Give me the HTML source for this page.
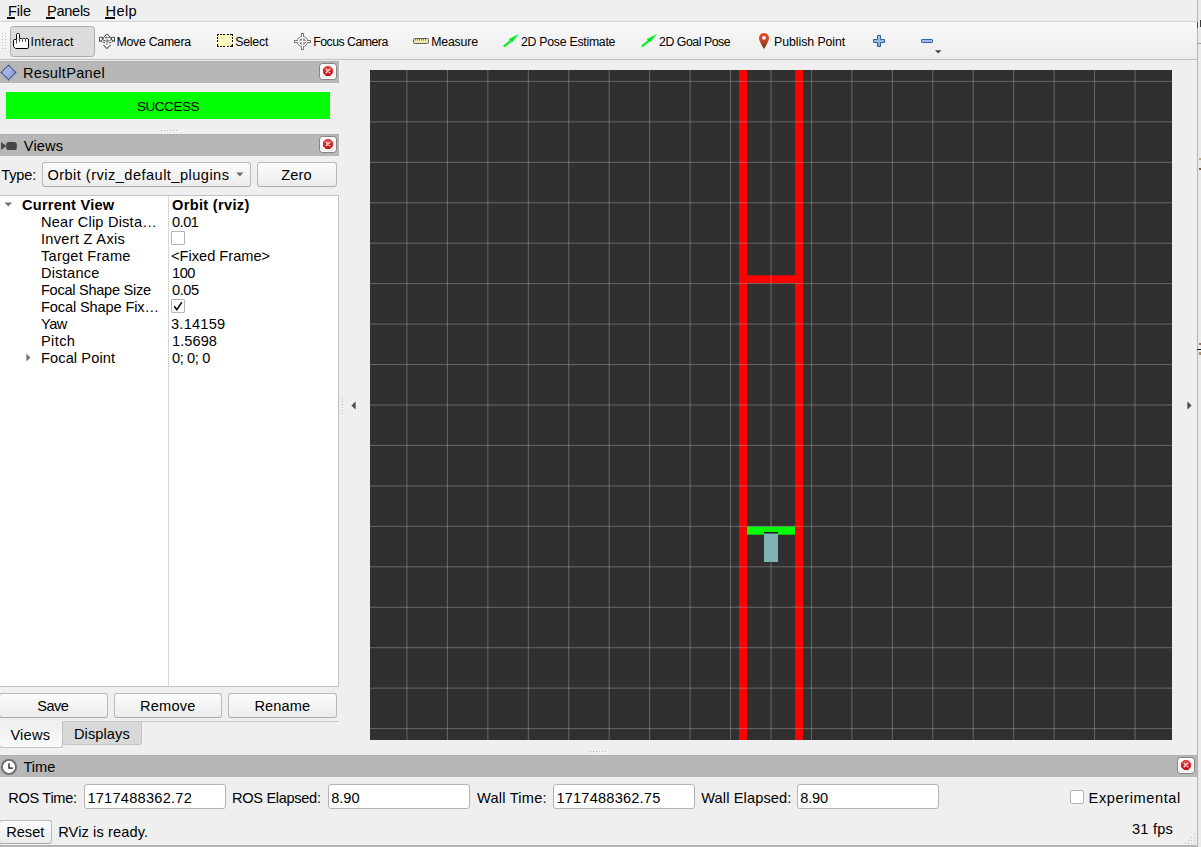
<!DOCTYPE html>
<html lang="en">
<head>
<meta charset="utf-8">
<title>RViz</title>
<style>
*{box-sizing:border-box;margin:0;padding:0}
html,body{width:1201px;height:847px;overflow:hidden;background:#efefef}
body{position:relative;font-family:"Liberation Sans","DejaVu Sans",sans-serif;font-size:14.6px;color:#000}
.abs{position:absolute}
.t{position:absolute;white-space:nowrap;line-height:1}
.t u{text-decoration:none}
.ul{position:absolute;top:17px;height:2px;background:#0a0a0a}
.m{font-size:14.6px}
.tb{font-size:12.3px}
.tr{font-size:14.6px}
.b{font-weight:bold}
#menubar{left:0;top:0;width:1197px;height:22px;background:#efefef;border-bottom:1px solid #d6d6d6}
#toolbar{left:0;top:22px;width:1197px;height:38px;background:linear-gradient(#f8f8f8,#eeeeee);border-bottom:1px solid #bebebe}
.docktitle{background:#b7b7b7;height:22px;border-top:1px solid #b0b0b0}
.closebtn{width:18px;height:17px;border:1px solid #858585;border-radius:3.5px;background:linear-gradient(#ffffff,#ededed);box-shadow:inset 0 0 0 1px #fdfdfd}
.btn{border:1px solid #b9b9b9;border-bottom-color:#adadad;border-radius:3px;background:linear-gradient(#fcfcfc,#ececec)}
.input{border:1px solid #b4b4b4;border-radius:3px;background:#fff;height:25px}
#view{left:370px;top:70px;width:802px;height:670px;background:#303030;overflow:hidden}
</style>
</head>
<body>
<div id="menubar" class="abs"></div>
<div id="toolbar" class="abs"></div>
<div class="ul" style="left:7.3px;width:7.6px"></div><div class="ul" style="left:46.2px;width:8.6px"></div><div class="ul" style="left:105.4px;width:9.6px"></div>

<!-- toolbar handle + icons -->
<svg class="abs" style="left:2px;top:33px" width="6" height="18" viewBox="0 0 6 18"><rect x="0" y="0" width="1" height="1" fill="#c2c2c2"/><rect x="1" y="1" width="1" height="1" fill="#fcfcfc"/><rect x="3" y="0" width="1" height="1" fill="#c2c2c2"/><rect x="4" y="1" width="1" height="1" fill="#fcfcfc"/><rect x="0" y="3" width="1" height="1" fill="#c2c2c2"/><rect x="1" y="4" width="1" height="1" fill="#fcfcfc"/><rect x="3" y="3" width="1" height="1" fill="#c2c2c2"/><rect x="4" y="4" width="1" height="1" fill="#fcfcfc"/><rect x="0" y="6" width="1" height="1" fill="#c2c2c2"/><rect x="1" y="7" width="1" height="1" fill="#fcfcfc"/><rect x="3" y="6" width="1" height="1" fill="#c2c2c2"/><rect x="4" y="7" width="1" height="1" fill="#fcfcfc"/><rect x="0" y="9" width="1" height="1" fill="#c2c2c2"/><rect x="1" y="10" width="1" height="1" fill="#fcfcfc"/><rect x="3" y="9" width="1" height="1" fill="#c2c2c2"/><rect x="4" y="10" width="1" height="1" fill="#fcfcfc"/><rect x="0" y="12" width="1" height="1" fill="#c2c2c2"/><rect x="1" y="13" width="1" height="1" fill="#fcfcfc"/><rect x="3" y="12" width="1" height="1" fill="#c2c2c2"/><rect x="4" y="13" width="1" height="1" fill="#fcfcfc"/><rect x="0" y="15" width="1" height="1" fill="#c2c2c2"/><rect x="1" y="16" width="1" height="1" fill="#fcfcfc"/><rect x="3" y="15" width="1" height="1" fill="#c2c2c2"/><rect x="4" y="16" width="1" height="1" fill="#fcfcfc"/></svg>
<div class="abs" style="left:10px;top:26px;width:85px;height:31px;background:#dcdcdc;border:1px solid #adadad;border-radius:3.5px"></div>
<svg class="abs" style="left:13px;top:33px" width="16" height="16" viewBox="0 0 16 16"><path d="M3.5 6.5V1.6Q3.5 .5 4.6 .5H5.4Q6.5 .5 6.5 1.6V5.5H8.6L9.5 6.1L10.4 5.5H11.6L12.5 6.1L13.4 5.5H14.2Q15.5 5.5 15.5 6.9V14.2Q15.5 15.5 14.2 15.5H2.5L.5 13.5V7.6Q.5 6.5 1.6 6.5Z" fill="#fff" stroke="#000" stroke-width="1" stroke-linejoin="round"/><path d="M3.5 6.5V10.6M6.5 5.5V8.8M9.5 6.2V8.8M12.5 6.2V8.8" stroke="#4a4a4a" stroke-width="1" fill="none"/></svg>
<svg class="abs" style="left:99px;top:33px" width="16" height="16" viewBox="0 0 16 16"><path d="M.5 4.3H3.7L3.1 7.2L.5 8.5Z M15.5 4.3H12.3L12.9 7.2L15.5 8.5Z" fill="#fff" stroke="#383838" stroke-width=".9" stroke-linejoin="round"/><path d="M4.5 4.3L8 .9L11.5 4.3Z" fill="#fff"/><path d="M4.5 4.3L8 .9L11.5 4.3" fill="none" stroke="#383838" stroke-width="1"/><path d="M8 15.6L11.6 11.8H4.4Z" fill="#fff"/><path d="M4.4 11.8L8 15.6L11.6 11.8" fill="none" stroke="#626262" stroke-width="1.1"/><rect x="7.1" y="4.6" width="1.8" height="7.4" fill="#b4b4b4"/><ellipse cx="8" cy="6.1" rx="4.3" ry="1.9" fill="none" stroke="#3c3c3c" stroke-width="1" stroke-dasharray="2.4 .8"/><path d="M1.6 8.1Q4 9.6 6.8 9.8M14.4 8.1Q12 9.6 9.2 9.8" fill="none" stroke="#444" stroke-width="1" stroke-dasharray="2 .8"/></svg>
<svg class="abs" style="left:216px;top:33px" width="18" height="15" viewBox="0 0 18 15"><rect x="0" y="0" width="18" height="15" rx="1" fill="#fff" opacity=".85"/><rect x="2" y="2" width="14" height="11" fill="#fdf7c3" stroke="#fff799" stroke-width="1"/><path d="M1 1.5H17M1 13.5H17M1.5 1V14M16.5 1V14" fill="none" stroke="#000" stroke-width="1" stroke-dasharray="2 1.2" shape-rendering="crispEdges"/><path d="M17 10.8V14H13.8Z" fill="#000"/></svg>
<svg class="abs" style="left:294px;top:33px" width="17" height="17" viewBox="0 0 17 17"><g fill="#fff" stroke="#7a7a7a" stroke-width="1"><rect x="7.5" y=".5" width="2" height="16"/><rect x=".5" y="7.5" width="16" height="2"/><circle cx="8.5" cy="8.5" r="5.2"/></g><circle cx="8.5" cy="8.5" r="3.1" fill="#a9a9a9" stroke="#6c6c6c" stroke-width="1" stroke-dasharray="1.4 .8"/><path d="M8.5 1V16M1 8.5H16" stroke="#fff" stroke-width="1.1"/></svg>
<svg class="abs" style="left:412px;top:37px" width="18" height="8" viewBox="0 0 18 8"><rect x="0" y="0" width="18" height="8" rx="1.5" fill="#fafafa"/><rect x="1.5" y="1.5" width="15" height="5" rx="1" fill="#f4eaab" stroke="#5f5f5f" stroke-width="1"/><path d="M3.5 2V3.6M5.5 2V3.6M7.5 2V3.6M9.5 2V3.6M11.5 2V3.6M13.5 2V3.6" stroke="#7b7b86" stroke-width="1"/></svg>
<svg class="abs" style="left:502px;top:33px" width="18" height="16" viewBox="0 0 18 16"><path d="M1.0 12.8L8.0 6.9L9.6 8.6L2.6 14.3Z" fill="#00f01e"/><path d="M6.9 6.1L17 1L10.4 9Z" fill="#00f01e"/><path d="M6.9 6.1L8.3 6.5L10 8.3L10.4 9Z" fill="#0a9c1c"/></svg>
<svg class="abs" style="left:640px;top:33px" width="18" height="16" viewBox="0 0 18 16"><path d="M1.0 12.8L8.0 6.9L9.6 8.6L2.6 14.3Z" fill="#00f01e"/><path d="M6.9 6.1L17 1L10.4 9Z" fill="#00f01e"/><path d="M6.9 6.1L8.3 6.5L10 8.3L10.4 9Z" fill="#0a9c1c"/></svg>
<svg class="abs" style="left:758px;top:32px" width="12" height="18" viewBox="0 0 12 18"><defs><linearGradient id="pg" x1="0" y1="0" x2="0" y2="1"><stop offset="0" stop-color="#ee4a2b"/><stop offset=".45" stop-color="#c8452a"/><stop offset="1" stop-color="#573a08"/></linearGradient></defs><path d="M6 17C6 17 1 9.5 1 6A5 5 0 0 1 11 6C11 9.5 6 17 6 17Z" fill="url(#pg)"/><circle cx="6" cy="5.8" r="1.9" fill="#fff"/></svg>
<svg class="abs" style="left:873px;top:35px" width="12" height="12" viewBox="0 0 12 12"><defs><linearGradient id="bl" x1="0" y1="0" x2="0" y2="1"><stop offset="0" stop-color="#b5cdea"/><stop offset="1" stop-color="#7ea5d6"/></linearGradient></defs><path d="M4.5 .5H7.5V4.5H11.5V7.5H7.5V11.5H4.5V7.5H.5V4.5H4.5Z" fill="url(#bl)" stroke="#2d61a5" stroke-width="1" stroke-linejoin="round"/></svg>
<svg class="abs" style="left:921px;top:39px" width="12" height="4" viewBox="0 0 12 4"><rect x=".5" y=".5" width="11" height="3" rx=".6" fill="#9dbbe2" stroke="#2d61a5" stroke-width="1"/></svg>
<svg class="abs" style="left:935px;top:50px" width="7" height="4" viewBox="0 0 7 4"><path d="M0 .3H6.4L3.2 3.6Z" fill="#454545"/></svg>

<!-- ResultPanel dock -->
<div class="abs docktitle" style="left:0;top:61px;width:339px"></div>
<svg class="abs" style="left:0;top:64px" width="17" height="17" viewBox="0 0 17 17"><defs><linearGradient id="dg" x1="0" y1="0" x2="1" y2="1"><stop offset="0" stop-color="#bcc8ec"/><stop offset="1" stop-color="#8894cc"/></linearGradient></defs><path d="M8.5 1.2L15.8 8.5L8.5 15.8L1.2 8.5Z" fill="url(#dg)" stroke="#2c4687" stroke-width="1.2" stroke-dasharray="1.6 .6"/></svg>
<div class="abs closebtn" style="left:319px;top:63px"><svg width="10" height="10" viewBox="0 0 10 10" style="position:absolute;left:3px;top:2px"><defs><linearGradient id="rg1" x1="0" y1="0" x2="0" y2="1"><stop offset="0" stop-color="#e8494d"/><stop offset="1" stop-color="#bf0808"/></linearGradient></defs><path d="M3 0H7L10 3V7L7 10H3L0 7V3Z" fill="url(#rg1)"/><path d="M3.2 3.2L6.8 6.8M6.8 3.2L3.2 6.8" stroke="#f6dede" stroke-width="1.4" stroke-linecap="round"/></svg></div>
<div class="abs" style="left:6px;top:92px;width:324px;height:27px;background:#00ff00"></div>
<div class="abs" style="left:161px;top:130px;width:16px;height:1px;background:repeating-linear-gradient(90deg,#b6b6b6 0 1px,transparent 1px 3px)"></div><div class="abs" style="left:162px;top:131px;width:16px;height:1px;background:repeating-linear-gradient(90deg,#fafafa 0 1px,transparent 1px 3px)"></div>

<!-- Views dock -->
<div class="abs docktitle" style="left:0;top:134px;width:339px"></div>
<svg class="abs" style="left:0;top:141px" width="18" height="10" viewBox="0 0 18 10"><path d="M1 1L6.6 5L1 9Z" fill="#4a4a4a"/><rect x="6.2" y="1" width="10.6" height="8" rx="2.6" fill="#464646"/></svg>
<div class="abs closebtn" style="left:319px;top:136px"><svg width="10" height="10" viewBox="0 0 10 10" style="position:absolute;left:3px;top:2px"><defs><linearGradient id="rg2" x1="0" y1="0" x2="0" y2="1"><stop offset="0" stop-color="#e8494d"/><stop offset="1" stop-color="#bf0808"/></linearGradient></defs><path d="M3 0H7L10 3V7L7 10H3L0 7V3Z" fill="url(#rg2)"/><path d="M3.2 3.2L6.8 6.8M6.8 3.2L3.2 6.8" stroke="#f6dede" stroke-width="1.4" stroke-linecap="round"/></svg></div>
<div class="abs btn" style="left:42px;top:162px;width:209px;height:25px"></div>
<svg class="abs" style="left:236px;top:172px" width="8" height="5" viewBox="0 0 8 5"><path d="M.2 .4H7.4L3.8 4.4Z" fill="#6e6e6e"/></svg>
<div class="abs btn" style="left:257px;top:162px;width:80px;height:25px"></div>

<!-- tree -->
<div class="abs" style="left:-1px;top:195px;width:340px;height:492px;background:#fff;border:1px solid #c3c3c3"></div>
<div class="abs" style="left:168px;top:196px;width:1px;height:490px;background:#d7d7d7"></div>
<svg class="abs" style="left:4px;top:202px" width="9" height="5" viewBox="0 0 9 5"><path d="M.4 .4H8.2L4.3 4.6Z" fill="#737373"/></svg>
<svg class="abs" style="left:26px;top:353px" width="5" height="9" viewBox="0 0 5 9"><path d="M.4 .6L4.4 4.5L.4 8.4Z" fill="#737373"/></svg>
<div class="abs" style="left:171px;top:231px;width:14px;height:14px;border:1px solid #b5b5b5;background:#fff;border-radius:1px"></div>
<div class="abs" style="left:171px;top:299px;width:14px;height:14px;border:1px solid #b5b5b5;background:#fff;border-radius:1px"></div><svg class="abs" style="left:171px;top:299px" width="14" height="14" viewBox="0 0 14 14"><path d="M3.2 7.2L5.8 10.6L10.8 3.2" fill="none" stroke="#111" stroke-width="1.6"/></svg>

<!-- buttons -->
<div class="abs btn" style="left:-1px;top:693px;width:109px;height:25px"></div>
<div class="abs btn" style="left:114px;top:693px;width:108px;height:25px"></div>
<div class="abs btn" style="left:228px;top:693px;width:109px;height:25px"></div>

<!-- tabs -->
<div class="abs" style="left:0;top:721px;width:339px;height:1px;background:#c6c6c6"></div>
<div class="abs" style="left:62px;top:722px;width:80px;height:23px;background:#d8d8d8;border:1px solid #c3c3c3;border-top:none;border-radius:0 0 3px 3px"></div>
<div class="abs" style="left:-1px;top:721px;width:64px;height:27px;background:linear-gradient(#efefef,#fafafa);border:1px solid #c3c3c3;border-top:1px solid #efefef;border-radius:0 0 3px 3px"></div>

<!-- 3D view -->
<div id="view" class="abs">
<svg class="abs" style="left:0;top:0" width="802" height="670" viewBox="0 0 802 670">
<g fill="#ff0000"><rect x="369" y="0" width="8" height="670"/><rect x="425" y="0" width="8" height="670"/><rect x="369" y="205.3" width="64" height="8"/></g>
<rect x="377" y="456.4" width="48" height="8.3" fill="#00ff00"/>
<path d="M36.95 0V670M77.40 0V670M117.85 0V670M158.30 0V670M198.75 0V670M239.20 0V670M279.65 0V670M320.10 0V670M360.55 0V670M401.00 0V670M441.45 0V670M481.90 0V670M522.35 0V670M562.80 0V670M603.25 0V670M643.70 0V670M684.15 0V670M724.60 0V670M765.05 0V670M0 11.40H802M0 51.85H802M0 92.30H802M0 132.75H802M0 173.20H802M0 213.65H802M0 254.10H802M0 294.55H802M0 335.00H802M0 375.45H802M0 415.90H802M0 456.35H802M0 496.80H802M0 537.25H802M0 577.70H802M0 618.15H802M0 658.60H802" stroke="#a0a0a4" stroke-opacity="0.5" stroke-width="1" fill="none"/>
<rect x="394" y="462" width="14" height="30" fill="#80b3b3"/>
<rect x="394" y="462" width="14" height="1.5" fill="#161f1f"/>
</svg>
</div>
<svg class="abs" style="left:350.5px;top:400.5px" width="5" height="9" viewBox="0 0 5 9"><path d="M4.6 .4L.4 4.5L4.6 8.6Z" fill="#4a4a4a"/></svg>
<svg class="abs" style="left:1186.6px;top:400.5px" width="5" height="9" viewBox="0 0 5 9"><path d="M.4 .4L4.6 4.5L.4 8.6Z" fill="#4a4a4a"/></svg>
<div class="abs" style="left:342px;top:398px;width:1px;height:16px;background:repeating-linear-gradient(180deg,#b6b6b6 0 1px,transparent 1px 3px)"></div><div class="abs" style="left:343px;top:399px;width:1px;height:16px;background:repeating-linear-gradient(180deg,#fafafa 0 1px,transparent 1px 3px)"></div>
<div class="abs" style="left:590px;top:751px;width:16px;height:1px;background:repeating-linear-gradient(90deg,#b6b6b6 0 1px,transparent 1px 3px)"></div><div class="abs" style="left:591px;top:752px;width:16px;height:1px;background:repeating-linear-gradient(90deg,#fafafa 0 1px,transparent 1px 3px)"></div>

<!-- Time dock -->
<div class="abs docktitle" style="left:0;top:755px;width:1197px"></div>
<svg class="abs" style="left:0;top:758px" width="18" height="18" viewBox="0 0 18 18"><circle cx="9" cy="9" r="7.1" fill="#fff" stroke="#6c6c6c" stroke-width="1.9"/><path d="M9 5.2V10H12.9" fill="none" stroke="#0c0c0c" stroke-width="1.25"/></svg>
<div class="abs closebtn" style="left:1177px;top:757px"><svg width="10" height="10" viewBox="0 0 10 10" style="position:absolute;left:3px;top:2px"><defs><linearGradient id="rg3" x1="0" y1="0" x2="0" y2="1"><stop offset="0" stop-color="#e8494d"/><stop offset="1" stop-color="#bf0808"/></linearGradient></defs><path d="M3 0H7L10 3V7L7 10H3L0 7V3Z" fill="url(#rg3)"/><path d="M3.2 3.2L6.8 6.8M6.8 3.2L3.2 6.8" stroke="#f6dede" stroke-width="1.4" stroke-linecap="round"/></svg></div>
<div class="abs input" style="left:84px;top:784px;width:142px"></div>
<div class="abs input" style="left:328px;top:784px;width:142px"></div>
<div class="abs input" style="left:553px;top:784px;width:142px"></div>
<div class="abs input" style="left:797px;top:784px;width:142px"></div>
<div class="abs" style="left:1070px;top:790px;width:14px;height:14px;border:1px solid #b5b5b5;background:#fff;border-radius:2px"></div>

<!-- status bar -->
<div class="abs btn" style="left:-1px;top:820px;width:53px;height:24px"></div>
<svg class="abs" style="left:1185px;top:834px" width="12" height="12" viewBox="0 0 12 12"><g fill="#c0c0c0"><rect x="9" y="0" width="1" height="1"/><rect x="6" y="3" width="1" height="1"/><rect x="9" y="3" width="1" height="1"/><rect x="3" y="6" width="1" height="1"/><rect x="6" y="6" width="1" height="1"/><rect x="9" y="6" width="1" height="1"/><rect x="0" y="9" width="1" height="1"/><rect x="3" y="9" width="1" height="1"/><rect x="6" y="9" width="1" height="1"/><rect x="9" y="9" width="1" height="1"/></g></svg>

<!-- all text labels -->
<div id="mFile" class="t m" style="left:8.00px;top:3.94px;letter-spacing:-0.167px;"><u>F</u>ile</div>
<div id="mPanels" class="t m" style="left:47.00px;top:3.94px;letter-spacing:-0.300px;"><u>P</u>anels</div>
<div id="mHelp" class="t m" style="left:105.60px;top:3.94px;letter-spacing:0.336px;"><u>H</u>elp</div>
<div id="tInteract" class="t tb" style="left:30.50px;top:35.89px;letter-spacing:0.288px;">Interact</div>
<div id="tMove" class="t tb" style="left:116.50px;top:35.89px;letter-spacing:-0.260px;">Move Camera</div>
<div id="tSelect" class="t tb" style="left:235.20px;top:35.89px;letter-spacing:-0.200px;">Select</div>
<div id="tFocus" class="t tb" style="left:313.20px;top:35.89px;letter-spacing:-0.502px;">Focus Camera</div>
<div id="tMeasure" class="t tb" style="left:431.20px;top:35.89px;letter-spacing:-0.167px;">Measure</div>
<div id="tPose" class="t tb" style="left:521.00px;top:35.89px;letter-spacing:-0.267px;">2D Pose Estimate</div>
<div id="tGoal" class="t tb" style="left:659.00px;top:35.89px;letter-spacing:-0.455px;">2D Goal Pose</div>
<div id="tPub" class="t tb" style="left:774.00px;top:35.89px;letter-spacing:-0.042px;">Publish Point</div>
<div id="dResult" class="t m" style="left:23.00px;top:65.94px;letter-spacing:0.300px;">ResultPanel</div>
<div id="success" class="t m" style="left:136.90px;top:99.79px;letter-spacing:-0.501px;font-size:13.6px;">SUCCESS</div>
<div id="dViews" class="t m" style="left:23.80px;top:138.94px;letter-spacing:0.125px;">Views</div>
<div id="type" class="t m" style="left:1.20px;top:167.94px;letter-spacing:-0.125px;">Type:</div>
<div id="combo" class="t m" style="left:47.40px;top:167.94px;letter-spacing:0.464px;">Orbit (rviz_default_plugins</div>
<div id="zero" class="t m" style="left:281.20px;top:167.94px;letter-spacing:0.164px;">Zero</div>
<div id="cv" class="t tr b" style="left:22.00px;top:197.94px;letter-spacing:0.211px;">Current View</div>
<div id="ov" class="t tr b" style="left:172.00px;top:197.94px;letter-spacing:0.324px;">Orbit (rviz)</div>
<div id="r1" class="t tr" style="left:41.00px;top:214.94px;letter-spacing:0.205px;">Near Clip Dista…</div>
<div id="r2" class="t tr" style="left:41.00px;top:231.94px;letter-spacing:0.293px;">Invert Z Axis</div>
<div id="r3" class="t tr" style="left:41.00px;top:248.94px;letter-spacing:0.243px;">Target Frame</div>
<div id="r4" class="t tr" style="left:41.00px;top:265.94px;letter-spacing:0.244px;">Distance</div>
<div id="r5" class="t tr" style="left:41.00px;top:282.94px;letter-spacing:-0.292px;">Focal Shape Size</div>
<div id="r6" class="t tr" style="left:41.00px;top:299.94px;letter-spacing:-0.134px;">Focal Shape Fix…</div>
<div id="r7" class="t tr" style="left:41.00px;top:316.94px;letter-spacing:-0.500px;">Yaw</div>
<div id="r8" class="t tr" style="left:41.00px;top:333.94px;letter-spacing:0.375px;">Pitch</div>
<div id="r9" class="t tr" style="left:41.00px;top:350.94px;letter-spacing:0.100px;">Focal Point</div>
<div id="v1" class="t tr" style="left:172.00px;top:214.94px;letter-spacing:-0.500px;">0.01</div>
<div id="v3" class="t tr" style="left:171.00px;top:248.94px;letter-spacing:0.010px;">&lt;Fixed Frame&gt;</div>
<div id="v4" class="t tr" style="left:172.00px;top:265.94px;letter-spacing:-0.450px;">100</div>
<div id="v5" class="t tr" style="left:172.00px;top:282.94px;letter-spacing:-0.399px;">0.05</div>
<div id="v7" class="t tr" style="left:171.00px;top:316.94px;letter-spacing:0.233px;">3.14159</div>
<div id="v8" class="t tr" style="left:172.00px;top:333.94px;letter-spacing:0.060px;">1.5698</div>
<div id="v9" class="t tr" style="left:172.00px;top:350.94px;letter-spacing:-0.368px;">0; 0; 0</div>
<div id="save" class="t m" style="left:37.20px;top:698.94px;letter-spacing:-0.499px;">Save</div>
<div id="remove" class="t m" style="left:140.00px;top:698.94px;letter-spacing:0.200px;">Remove</div>
<div id="rename" class="t m" style="left:254.40px;top:698.94px;letter-spacing:0.100px;">Rename</div>
<div id="tabViews" class="t m" style="left:10.40px;top:727.94px;letter-spacing:0.250px;">Views</div>
<div id="tabDisp" class="t m" style="left:74.00px;top:726.94px;letter-spacing:0.076px;">Displays</div>
<div id="dTime" class="t m" style="left:23.40px;top:759.94px;letter-spacing:-0.000px;">Time</div>
<div id="rosTime" class="t m" style="left:8.20px;top:790.94px;letter-spacing:-0.314px;">ROS Time:</div>
<div id="rosTimeV" class="t m" style="left:87.40px;top:790.94px;letter-spacing:0.250px;">1717488362.72</div>
<div id="rosEl" class="t m" style="left:232.00px;top:790.94px;letter-spacing:-0.318px;">ROS Elapsed:</div>
<div id="rosElV" class="t m" style="left:331.20px;top:790.94px;letter-spacing:0.000px;">8.90</div>
<div id="wallTime" class="t m" style="left:477.00px;top:790.94px;letter-spacing:0.219px;">Wall Time:</div>
<div id="wallTimeV" class="t m" style="left:556.40px;top:790.94px;letter-spacing:0.206px;">1717488362.75</div>
<div id="wallEl" class="t m" style="left:701.20px;top:790.94px;letter-spacing:0.126px;">Wall Elapsed:</div>
<div id="wallElV" class="t m" style="left:800.20px;top:790.94px;letter-spacing:-0.166px;">8.90</div>
<div id="exp" class="t m" style="left:1088.60px;top:790.94px;letter-spacing:0.592px;">Experimental</div>
<div id="reset" class="t m" style="left:6.20px;top:824.94px;letter-spacing:-0.000px;">Reset</div>
<div id="ready" class="t m" style="left:58.20px;top:824.94px;letter-spacing:0.114px;">RViz is ready.</div>
<div id="fps" class="t m" style="left:1132.00px;top:821.94px;letter-spacing:0.200px;">31 fps</div>

<!-- window edges -->
<div class="abs" style="left:1197px;top:0;width:1px;height:847px;background:#b3b3b3"></div>
<div class="abs" style="left:1198px;top:0;width:3px;height:847px;background:#eaeaea"></div>
<div class="abs" style="left:1197px;top:22px;width:1px;height:6px;background:#4a4a4a"></div>
<div class="abs" style="left:1200px;top:20px;width:1px;height:7px;background:#3a3a3a"></div>
<div class="abs" style="left:1198px;top:43px;width:3px;height:1px;background:#9a9a9a"></div>
<div class="abs" style="left:1199px;top:158px;width:2px;height:2px;background:#c9a45a"></div>
<div class="abs" style="left:1199px;top:168px;width:2px;height:2px;background:#8a5a30"></div>
<div class="abs" style="left:1199px;top:343px;width:2px;height:2px;background:#a06a50"></div>
<div class="abs" style="left:1197px;top:349px;width:4px;height:1px;background:#1a1a1a"></div>
<div class="abs" style="left:1199px;top:352px;width:2px;height:3px;background:#b08a50"></div>
<div class="abs" style="left:0;top:845px;width:1198px;height:2px;background:#b4b4b4"></div>
</body>
</html>
